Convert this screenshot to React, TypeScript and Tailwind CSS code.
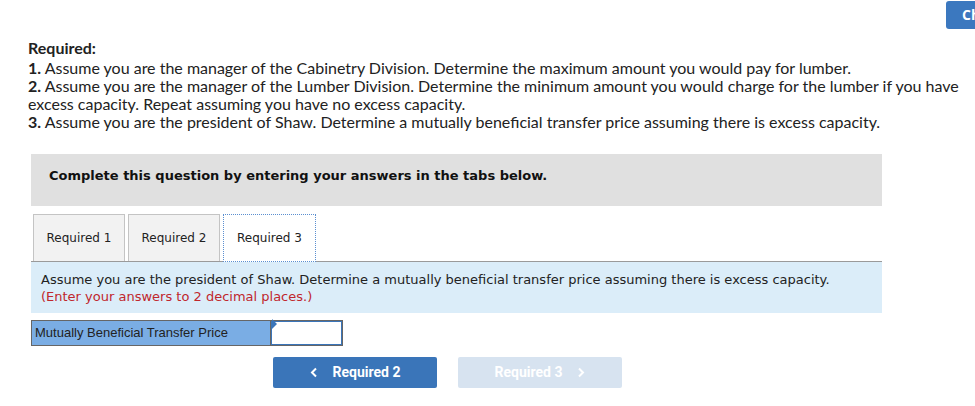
import React from "react";

export default function App() {
  return (
    <div className="relative w-[975px] h-[406px] overflow-hidden bg-white">
      {/* clipped top-right button */}
      <div className="absolute left-[946px] top-[1px] w-[40px] h-[28px] overflow-hidden">
        <div className="h-[28px] w-[140px] rounded-[3px] bg-[#3b78bf] pl-[16px] text-white font-bold text-[14px] leading-[28px] whitespace-nowrap [font-family:'Open_Sans',sans-serif]">
          Check my work
        </div>
      </div>

      <div className="pt-[39px] pl-[28px] text-[16px] leading-[18px] text-[#222] [font-family:Lato,sans-serif]">
        <div className="font-bold">Required:</div>
        <div className="mt-[2px] whitespace-nowrap">
          <b>1.</b> Assume you are the manager of the Cabinetry Division. Determine the maximum amount you would pay for lumber.
        </div>
        <div className="whitespace-nowrap">
          <b>2.</b> Assume you are the manager of the Lumber Division. Determine the minimum amount you would charge for the lumber if you have
          <br />
          excess capacity. Repeat assuming you have no excess capacity.
        </div>
        <div className="whitespace-nowrap">
          <b>3.</b> Assume you are the president of Shaw. Determine a mutually beneficial transfer price assuming there is excess capacity.
        </div>
      </div>

      <div className="ml-[31px] w-[851px] [font-family:'DejaVu_Sans',Verdana,sans-serif]">
        <div className="mt-[23px] h-[52px] bg-[#e0e0e0] pl-[18px] pt-[14px] text-[13px] leading-[16px] font-bold text-[#111]">
          Complete this question by entering your answers in the tabs below.
        </div>

        <div className="mt-[8px] flex items-end gap-[3px] pl-[2px] border-b border-[#9a9a9a] h-[48px]">
          <div className="h-[47px] w-[92px] bg-[#f2f2f2] border border-[#c4c4c4] border-b-0 flex items-center justify-center text-[12px] text-[#222]">
            Required 1
          </div>
          <div className="h-[47px] w-[92px] bg-[#f2f2f2] border border-[#c4c4c4] border-b-0 flex items-center justify-center text-[12px] text-[#222]">
            Required 2
          </div>
          <div className="relative -mb-px h-[48px] w-[93px] bg-white border border-dotted border-[#5b8fd0] flex items-center justify-center text-[12px] text-[#222]">
            Required 3
          </div>
        </div>

        <div className="h-[51px] bg-[#dbedf9] pl-[10px] pt-[9px] text-[13px] leading-[17px]">
          <div className="text-[#222] whitespace-nowrap">
            Assume you are the president of Shaw. Determine a mutually beneficial transfer price assuming there is excess capacity.
          </div>
          <div className="text-[#c0272d]">(Enter your answers to 2 decimal places.)</div>
        </div>

        <div className="mt-[7px] flex h-[26px]">
          <div className="w-[240px] h-[26px] bg-[#7aade4] border border-[#666] pl-[3px] flex items-center text-[13px] text-[#222] [font-family:'Liberation_Sans',Arial,sans-serif]">
            Mutually Beneficial Transfer Price
          </div>
          <div className="relative w-[72px] h-[26px] border border-[#666] border-l-0 bg-white">
            <div className="h-full w-full border border-[#3a75b9]"></div>
            <div className="absolute left-[1px] top-[1px] w-0 h-0 border-t-[5px] border-t-transparent border-b-[5px] border-b-transparent border-l-[5px] border-l-[#3a75b9] -translate-y-[3px]"></div>
          </div>
        </div>

        <div className="mt-[11px] ml-[242px] flex gap-[21px] [font-family:Roboto,sans-serif]">
          <div className="w-[164px] h-[31px] rounded-[2px] bg-[#3a75b9] flex items-center justify-center gap-[15px] text-white font-bold text-[14px]">
            <svg width="8" height="11" viewBox="0 0 8 11" fill="none">
              <path d="M6 1.5 L2 5.5 L6 9.5" stroke="white" strokeWidth="2" />
            </svg>
            <span>Required 2</span>
          </div>
          <div className="w-[164px] h-[31px] rounded-[2px] bg-[#d7e3f0] flex items-center justify-center gap-[15px] text-white font-bold text-[14px]">
            <span>Required 3</span>
            <svg width="8" height="11" viewBox="0 0 8 11" fill="none">
              <path d="M2 1.5 L6 5.5 L2 9.5" stroke="white" strokeWidth="2" />
            </svg>
          </div>
        </div>
      </div>
    </div>
  );
}
